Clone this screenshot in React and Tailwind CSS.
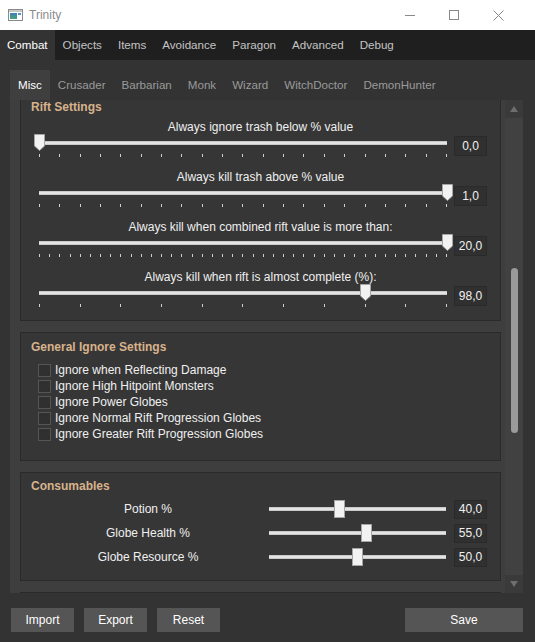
import React from "react";

const FONT = { fontFamily: '"Liberation Sans", Arial, sans-serif' };

function TitleBar() {
  return (
    <div className="h-[30px] bg-white flex items-center shrink-0">
      <svg width="15" height="12" viewBox="0 0 15 12" className="ml-[8px]">
        <rect x="0.5" y="0.5" width="14" height="11" fill="#ffffff" stroke="#8a8a8a" />
        <rect x="1" y="1" width="13" height="2" fill="#c8c8c8" />
        <defs>
          <linearGradient id="ig" x1="0" y1="0" x2="0" y2="1">
            <stop offset="0" stopColor="#3a7fb8" />
            <stop offset="1" stopColor="#4aa37a" />
          </linearGradient>
        </defs>
        <rect x="2" y="4" width="7" height="6" fill="url(#ig)" />
        <rect x="10" y="4" width="3" height="2" fill="#5b8fc7" />
      </svg>
      <span className="ml-[6px] text-[12px] text-[#8c8c8c]">Trinity</span>
      <div className="ml-auto mr-[15px] flex items-center h-full">
        <div className="w-[44px] h-full flex items-center justify-center">
          <div className="w-[10px] h-px bg-[#888]" />
        </div>
        <div className="w-[44px] h-full flex items-center justify-center">
          <div className="w-[10px] h-[10px] border border-[#888]" />
        </div>
        <div className="w-[44px] h-full flex items-center justify-center">
          <svg width="11" height="11" viewBox="0 0 11 11">
            <path d="M0.5 0.5 L10.5 10.5 M10.5 0.5 L0.5 10.5" stroke="#888" strokeWidth="1" />
          </svg>
        </div>
      </div>
    </div>
  );
}

function MainTabs() {
  const tabs = ["Combat", "Objects", "Items", "Avoidance", "Paragon", "Advanced", "Debug"];
  return (
    <div className="h-[30px] bg-[#1f1f1f] flex shrink-0">
      {tabs.map((t, i) => (
        <div
          key={t}
          className={
            "h-full flex items-center px-[8px] text-[11.6px] " +
            (i === 0 ? "bg-[#333333] text-white pl-[7px] pr-[7px]" : "text-[#c4c4c4]")
          }
        >
          {t}
        </div>
      ))}
    </div>
  );
}

function SubTabs() {
  const tabs = ["Misc", "Crusader", "Barbarian", "Monk", "Wizard", "WitchDoctor", "DemonHunter"];
  return (
    <div className="h-[30px] flex shrink-0">
      {tabs.map((t, i) => (
        <div
          key={t}
          className={
            "h-full flex items-center px-[8px] text-[11.6px] " +
            (i === 0 ? "bg-[#3f3f3f] text-white" : "text-[#9a9a9a]")
          }
        >
          {t}
        </div>
      ))}
    </div>
  );
}

function ValueBox({ v, h = "h-[20px]" }) {
  return (
    <div
      className={
        "w-[33px] " +
        h +
        " bg-[#303030] border border-[#2a2a2a] flex items-center justify-center text-[12px] text-[#f0f0f0]"
      }
    >
      {v}
    </div>
  );
}

function PointerThumb() {
  return (
    <svg width="11" height="17" viewBox="0 0 11 17">
      <path d="M0.5 0.5 H10.5 V12 L5.5 16.5 L0.5 12 Z" fill="#f2f2f2" stroke="#a5a5a5" />
    </svg>
  );
}

function RiftSlider({ label, ticks, frac, value }) {
  const W = 408;
  return (
    <div className="flex flex-col">
      <div className="h-[16px] leading-[16px] text-center text-[12px] text-[#f0f0f0]">{label}</div>
      <div className="h-[24px] flex pl-[18px]">
        <div className="relative w-[408px] flex flex-col">
          <div className="mt-[6px] h-[4px] bg-[#e4e4e4] border-y border-[#c9c9c9]" />
          <div className="mt-[9px] h-[4px] flex justify-between">
            {Array.from({ length: ticks }).map((_, i) => (
              <div key={i} className="w-px h-[3px] bg-[#d0d0d0]" />
            ))}
          </div>
          <div className="absolute top-[-1px]" style={{ left: frac * W - 5.5 }}>
            <PointerThumb />
          </div>
        </div>
        <div className="ml-[7px] mt-[1px]">
          <ValueBox v={value} />
        </div>
      </div>
    </div>
  );
}

function ConsRow({ label, value }) {
  const W = 177;
  const f = parseFloat(value) / 100;
  return (
    <div className="h-[24px] flex items-center">
      <div className="w-[232px] ml-[11px] text-center text-[12px] text-[#f0f0f0]">{label}</div>
      <div className="relative ml-[5px] w-[177px] h-[18px] flex items-center">
        <div className="w-full h-[4px] bg-[#e4e4e4] border-y border-[#c9c9c9]" />
        <div
          className="absolute top-0 w-[11px] h-[18px] bg-[#f2f2f2] border border-[#a5a5a5]"
          style={{ left: f * W - 5.5 }}
        />
      </div>
      <div className="ml-[8px]">
        <ValueBox v={value} h="h-[19px]" />
      </div>
    </div>
  );
}

function Header({ children, className = "" }) {
  return (
    <div className={"pl-[10px] text-[12px] font-bold text-[#d8b28c] " + className}>{children}</div>
  );
}

function Checkbox({ label }) {
  return (
    <div className="h-[16px] flex items-center pl-[17px]">
      <div className="w-[13px] h-[13px] border border-[#555555] bg-[#303030]" />
      <span className="ml-[4px] text-[12px] text-[#f0f0f0]">{label}</span>
    </div>
  );
}

function Scrollbar() {
  return (
    <div className="w-[18px] flex flex-col bg-[#414141]">
      <div className="h-[18px] bg-[#3a3a3a] flex items-center justify-center">
        <svg width="8" height="6" viewBox="0 0 8 6">
          <path d="M4 0 L8 6 L0 6 Z" fill="#6e6e6e" />
        </svg>
      </div>
      <div className="flex-1 flex flex-col items-center pt-[150px] pb-[142px]">
        <div className="w-[7px] flex-1 rounded-full bg-[#9a9a9a]" />
      </div>
      <div className="h-[18px] bg-[#3a3a3a] flex items-center justify-center">
        <svg width="8" height="6" viewBox="0 0 8 6">
          <path d="M0 0 L8 0 L4 6 Z" fill="#6e6e6e" />
        </svg>
      </div>
    </div>
  );
}

export default function App() {
  return (
    <div className="w-[535px] h-[642px] flex flex-col bg-[#333333] overflow-hidden" style={FONT}>
      <TitleBar />
      <MainTabs />
      <div className="flex-1 flex flex-col pl-[10px] pr-[12px] pt-[10px]">
        <SubTabs />
        <div className="h-[493px] bg-[#3e3e3e] flex overflow-hidden shrink-0">
          <div className="w-[495px] pl-[10px] pr-[4px] flex flex-col gap-[11px] overflow-hidden">
            <div className="shrink-0 bg-[#363636] border-x border-b border-[#2a2a2a] pb-[11px]">
              <Header className="h-[15px] leading-[15px]">Rift Settings</Header>
              <div className="mt-[4px] flex flex-col gap-[10px]">
                <RiftSlider label="Always ignore trash below % value" ticks={21} frac={0} value="0,0" />
                <RiftSlider label="Always kill trash above % value" ticks={21} frac={1} value="1,0" />
                <RiftSlider
                  label="Always kill when combined rift value is more than:"
                  ticks={41}
                  frac={1}
                  value="20,0"
                />
                <RiftSlider
                  label="Always kill when rift is almost complete (%):"
                  ticks={11}
                  frac={0.8}
                  value="98,0"
                />
              </div>
            </div>
            <div className="shrink-0 bg-[#363636] border border-[#2a2a2a] pt-[6px] pb-[18px]">
              <Header className="h-[16px] leading-[16px]">General Ignore Settings</Header>
              <div className="mt-[7px] flex flex-col">
                <Checkbox label="Ignore when Reflecting Damage" />
                <Checkbox label="Ignore High Hitpoint Monsters" />
                <Checkbox label="Ignore Power Globes" />
                <Checkbox label="Ignore Normal Rift Progression Globes" />
                <Checkbox label="Ignore Greater Rift Progression Globes" />
              </div>
            </div>
            <div className="shrink-0 bg-[#363636] border border-[#2a2a2a] pt-[5px] pb-[11px]">
              <Header className="h-[16px] leading-[16px]">Consumables</Header>
              <div className="mt-[3px] flex flex-col">
                <ConsRow label="Potion %" value="40,0" />
                <ConsRow label="Globe Health %" value="55,0" />
                <ConsRow label="Globe Resource %" value="50,0" />
              </div>
            </div>
            <div className="shrink-0 h-[40px] bg-[#363636] border border-[#2a2a2a]" />
          </div>
          <Scrollbar />
        </div>
        <div className="mt-[15px] flex h-[24px] pl-[1px]">
          {["Import", "Export", "Reset"].map((b) => (
            <div
              key={b}
              className="w-[63px] mr-[10px] bg-[#555555] flex items-center justify-center text-[12px] text-white"
            >
              {b}
            </div>
          ))}
          <div className="ml-auto w-[118px] bg-[#555555] flex items-center justify-center text-[12px] text-white">
            Save
          </div>
        </div>
      </div>
    </div>
  );
}
